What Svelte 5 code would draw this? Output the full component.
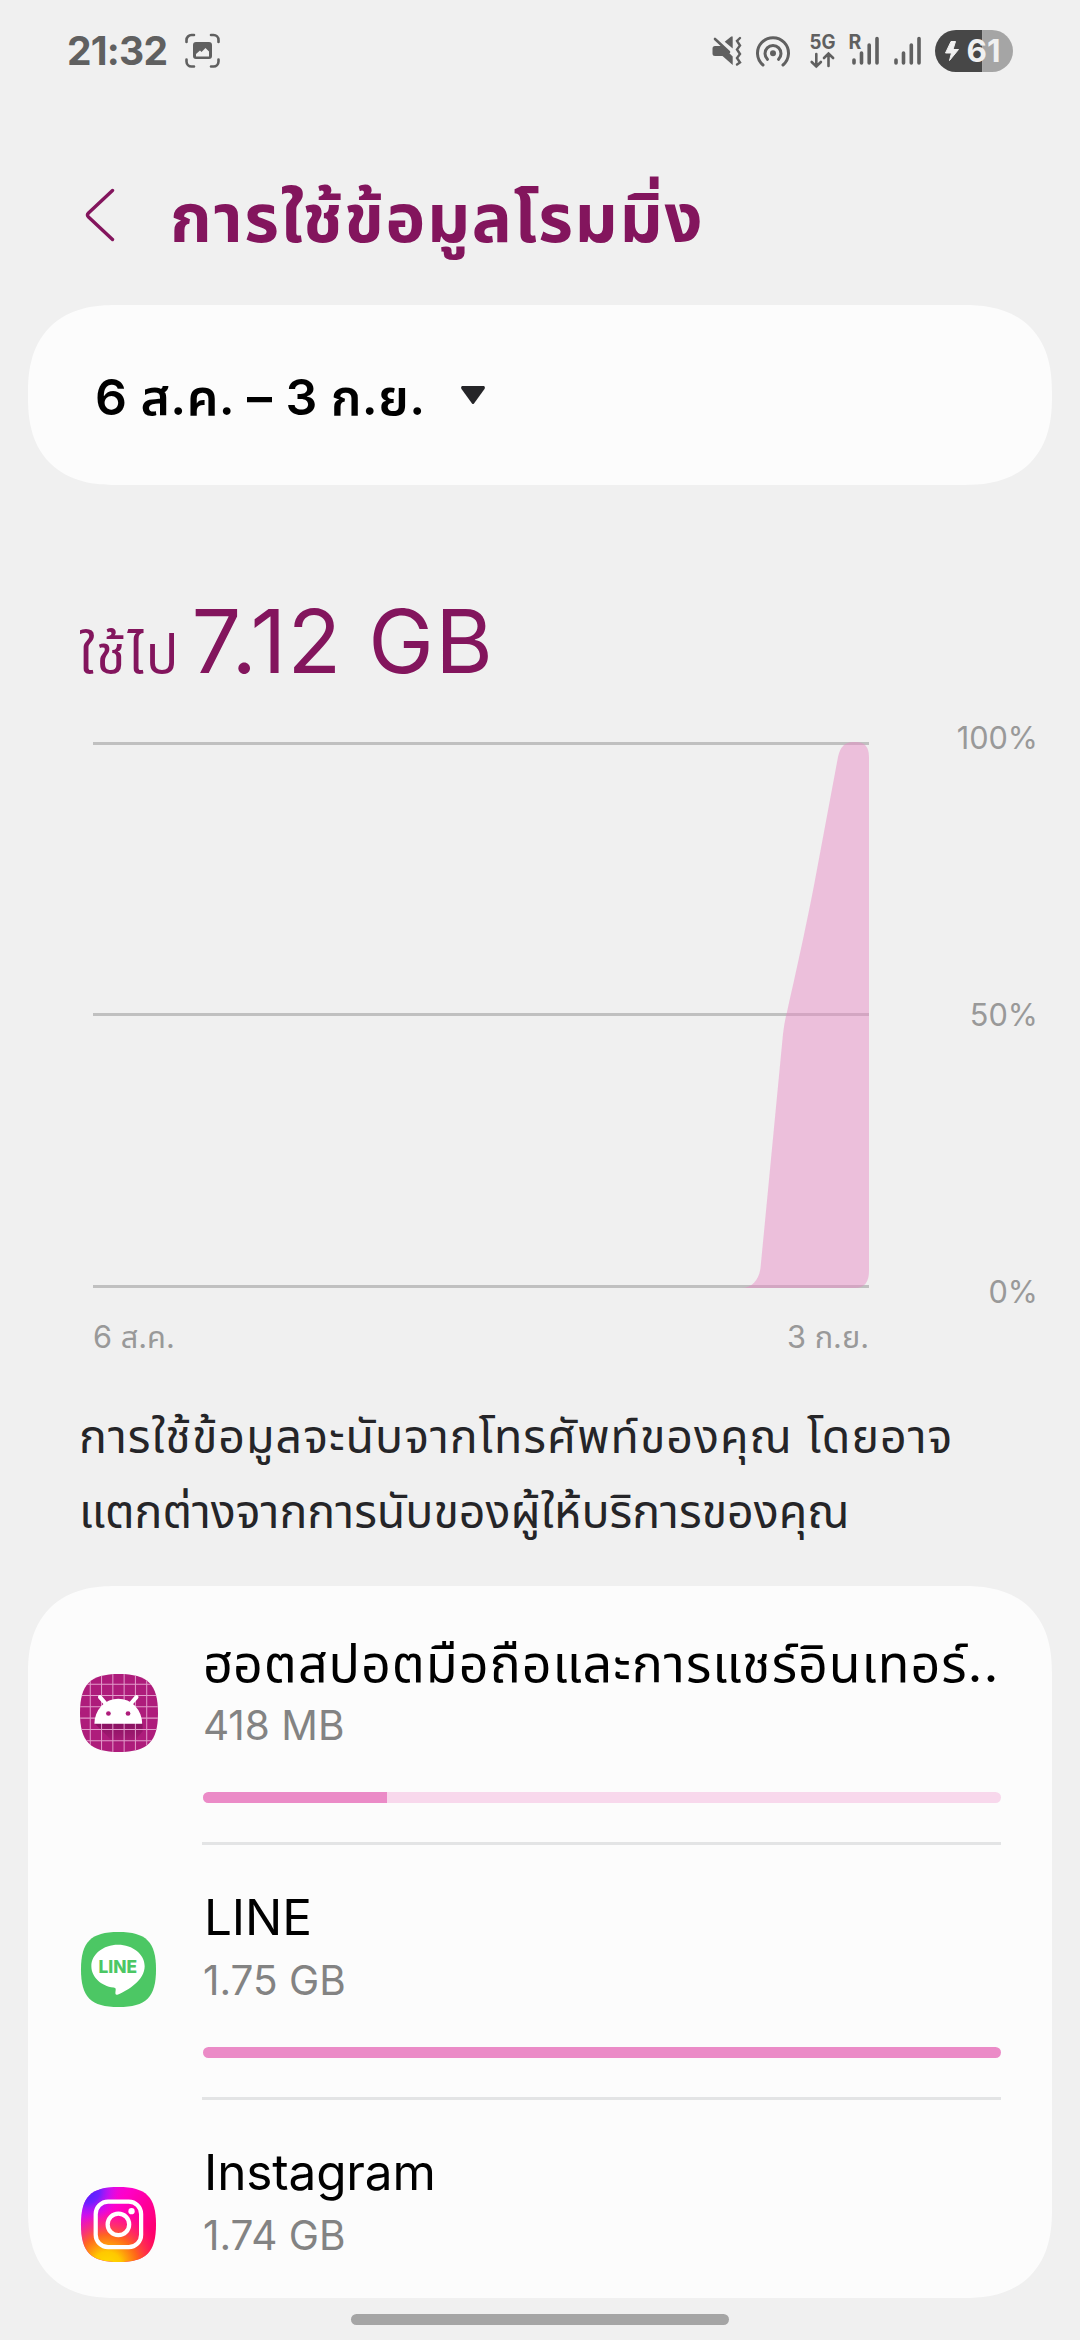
<script lang="ts">
  type App = { id: string; name: string; usage: string; percent: number };

  const apps: App[] = [
    { id: 'hotspot', name: 'ฮอตสปอตมือถือและการแชร์อินเทอร์..', usage: '418 MB', percent: 23.1 },
    { id: 'line', name: 'LINE', usage: '1.75 GB', percent: 100 },
    { id: 'instagram', name: 'Instagram', usage: '1.74 GB', percent: 99 },
  ];
  const squircle = 'M38 0C66 0 76 10 76 38S66 76 38 76 0 66 0 38 10 0 38 0Z';
  const gridSteps = [10, 21, 32, 43, 54, 65];
</script>

<div class="screen">
  <header class="status">
    <span class="status__time">21:32</span>
    <svg class="status__shot" width="36" height="36" viewBox="0 0 36 36">
      <path
        d="M1.5 9V7a5 5 0 0 1 5-5H9M26 2h2.500a5 5 0 0 1 5 5v2M33.500 26.500v2a5 5 0 0 1-5 5H26M9 33.500H6.500a5 5 0 0 1-5-5v-2"
        fill="none"
        stroke="#606060"
        stroke-width="2.600"
        stroke-linecap="round"
      />
      <path
        fill="#606060"
        fill-rule="evenodd"
        d="M11 9h13q3 0 3 3v11q0 3-3 3H11q-3 0-3-3V12q0-3 3-3ZM11 23.500h13v-5l-3.500-3.500-4 4-1.500-1.500-4 3.500Z"
      />
    </svg>
    <svg class="status__icons" width="305" height="46" viewBox="0 0 305 46">
      <g fill="none" stroke="#606060" stroke-width="2.600" stroke-linecap="round">
        <path d="M3 9 17 22" />
        <path d="m28 8-3 3 3 4.500-3 4 3 4.500-3 4 3 4.500-3 2" stroke-width="2.400" />
        <path d="M51 35a15.500 15.500 0 1 1 20 0" stroke-width="3" />
        <path d="M55.500 29.300a8 8 0 1 1 11 0" stroke-width="3" />
        <path
          d="M104.300 24v12.500M99.700 32l4.600 4.500 4.600-4.500M116.500 36V23.500M112 28l4.500-4.500 4.600 4.500"
          stroke-width="2.600"
        />
        <path
          d="M142 30v3M149.500 23v10M157.200 15v18M165 8.500v24.500M184 30v3M191.500 23v10M199.300 15v18M207 8.500v24.500"
          stroke-width="3.600"
        />
      </g>
      <g fill="#606060">
        <path d="M.5 18.500q0-2.500 2.500-2.500h7L20.700 26.500V35L10.500 26H3q-2.500 0-2.500-2.500ZM12.700 11.800l6.500-5.300h1.500V18.500Z" />
        <circle cx="61" cy="23.300" r="3" />
      </g>
      <text class="tiny" x="97.500" y="19" textLength="26" lengthAdjust="spacingAndGlyphs">5G</text>
      <text class="tiny" x="136.500" y="19">R</text>
      <path fill="#474747" d="M244 0h26.400v42H244a21 21 0 0 1 0-42Z" />
      <path fill="#a5a5a5" d="M270.400 0H280a21 21 0 0 1 0 42h-9.600Z" />
      <path
        fill="#f0f0f0"
        stroke="#f0f0f0"
        stroke-linejoin="round"
        d="M239 11.500 233.500 23h6L237.500 30.500 246.500 19.500h-5.500l2.500-8Z"
      />
      <text class="level" x="254.500" y="32.300" textLength="34" lengthAdjust="spacingAndGlyphs">61</text>
    </svg>
  </header>

  <div class="titlebar">
    <svg width="30" height="54" viewBox="0 0 30 54">
      <path
        d="M27.500 2.500 3.500 25q-2 2 0 4L27.500 51.500"
        fill="none"
        stroke="#83155d"
        stroke-width="3.400"
        stroke-linecap="round"
      />
    </svg>
    <h1>การใช้ข้อมูลโรมมิ่ง</h1>
  </div>

  <button class="card period">
    <span>6 ส.ค. – 3 ก.ย.</span>
    <svg width="24" height="19" viewBox="0 0 24 19">
      <path d="M1 0h22q1.500 1 .5 3L13 17.500q-1 1.200-2 0L.5 3Q-.5 1 1 0Z" fill="#252528" />
    </svg>
  </button>

  <p class="used"><span>ใช้ไป</span><strong>7.12 GB</strong></p>

  <section class="chart">
    <div class="chart__plot">
      <svg width="776" height="546" viewBox="0 0 776 546">
        <path d="M0 1.500h776M0 272.500h776M0 544.500h776" stroke="#c0c0c0" stroke-width="3" />
        <path
          fill="#e889c5"
          fill-opacity=".48"
          d="M648 546C660 546 666 537 667.500 526L690 292Q691.500 279 694 270C707 213 716 170 722 138L745 15Q748 0 760 0h3q13 0 13 15v514q0 17-14 17Z"
        />
      </svg>
      <div class="chart__dates"><span>6 ส.ค.</span><span>3 ก.ย.</span></div>
    </div>
    <div class="chart__scale"><span>100%</span><span>50%</span><span>0%</span></div>
  </section>

  <p class="note">
    การใช้ข้อมูลจะนับจากโทรศัพท์ของคุณ โดยอาจ<br />
    <span class="note__tail">แตกต่างจากการนับของผู้ให้บริการของคุณ</span>
  </p>

  <ul class="card apps">
    {#each apps as app (app.id)}
      <li class="app">
        <svg
          class="app__icon app__icon--{app.id}"
          width="78"
          height="78"
          viewBox={app.id === 'hotspot' ? '0 0 76 76' : '-1 -1 79 79'}
        >
          {#if app.id === 'hotspot'}
            <defs>
              <clipPath id="shape"><path d={squircle} /></clipPath>
              <linearGradient id="shade" x1="0" y1="0" x2="0" y2="1">
                <stop offset="0" stop-color="#7c1058" stop-opacity=".75" />
                <stop offset="1" stop-color="#7c1058" stop-opacity="0" />
              </linearGradient>
            </defs>
            <g clip-path="url(#shape)">
              <path d="M0 0h76v76H0Z" fill="#ae1c7b" />
              <path d="M14 48h47v8L50 69H35Z" fill="url(#shade)" />
              {#each gridSteps as step}
                <path d="M{step} 0v76M0 {step}h76" stroke="#e29bca" stroke-width="1" />
              {/each}
            </g>
            <path d="M14 48.500a23.300 24.500 0 0 1 46.600 0Z" fill="#fff" />
            <path
              d="m19.500 22.500 6 7M55 22.500l-6 7"
              stroke="#fff"
              stroke-width="4"
              stroke-linecap="round"
            />
            <circle cx="27.700" cy="38.500" r="2.300" fill="#ae1c7b" />
            <circle cx="46.800" cy="38.500" r="2.300" fill="#ae1c7b" />
          {:else if app.id === 'line'}
            <path d={squircle} fill="#4cc764" />
            <path
              d="M37.500 13c-15 0-27 9.700-27 21.700 0 10.800 9.600 20 22.500 21.600 2.600.5 2.400 1.500 1.900 4.500-.3 2 .2 3.500 2.600 2.500C47.500 59 64.500 49 64.500 34.700c0-12-12-21.700-27-21.700Z"
              fill="#fff"
            />
            <text class="line-mark" x="17.800" y="41.600" textLength="39" lengthAdjust="spacingAndGlyphs">LINE</text>
          {:else}
            <defs>
              <linearGradient id="ig-base" x1="0" y1="0" x2="1" y2=".7">
                <stop offset="0" stop-color="#c018ff" />
                <stop offset=".45" stop-color="#ff00c8" />
                <stop offset="1" stop-color="#ff0060" />
              </linearGradient>
              <radialGradient id="ig-warm" cx=".35" cy="1.050" r=".75">
                <stop offset="0" stop-color="#ffdc00" />
                <stop offset=".25" stop-color="#ffc800" />
                <stop offset=".55" stop-color="#ff7010" stop-opacity=".9" />
                <stop offset="1" stop-color="#ff3060" stop-opacity="0" />
              </radialGradient>
              <radialGradient id="ig-blue" cx=".08" cy=".05" r=".42">
                <stop offset="0" stop-color="#4a20ff" />
                <stop offset=".4" stop-color="#7020ff" />
                <stop offset="1" stop-color="#d010ff" stop-opacity="0" />
              </radialGradient>
            </defs>
            <path d={squircle} fill="url(#ig-base)" />
            <path d={squircle} fill="url(#ig-warm)" />
            <path d={squircle} fill="url(#ig-blue)" />
            <g fill="none" stroke="#fff" stroke-width="4.300">
              <rect x="14.900" y="14.900" width="46" height="46" rx="12.500" />
              <circle cx="37.900" cy="37.900" r="10.900" />
            </g>
            <circle cx="51.200" cy="24.500" r="3.200" fill="#fff" />
          {/if}
        </svg>
        <div class="app__body">
          <div class="app__name app__name--{app.id}">{app.name}</div>
          <div class="app__usage">{app.usage}</div>
          <div class="bar"><div class="bar__fill" style="width: {app.percent}%"></div></div>
        </div>
      </li>
    {/each}
  </ul>

  <div class="home"></div>
</div>

<style>
  :global(body) {
    background: #f0f0f0;
  }
  .screen {
    display: flex;
    flex-direction: column;
    box-sizing: border-box;
    width: 1080px;
    height: 2340px;
    overflow: hidden;
    background: #f0f0f0;
    font-family: Inter, 'Noto Sans Thai', 'Noto Sans', sans-serif;
    color: #000;
  }
  .status {
    display: flex;
    align-items: flex-start;
    flex: none;
    height: 150px;
    padding: 0 63px 0 67px;
  }
  .status__time {
    width: 118px;
    padding-top: 26px;
    font-size: 39px;
    font-weight: 700;
    line-height: 50px;
    letter-spacing: -0.8px;
    color: #606060;
  }
  .status__shot {
    margin-top: 33px;
  }
  .status__icons {
    margin: 30px 0 0 auto;
  }
  .tiny {
    font-size: 19.5px;
    font-weight: 700;
    fill: #606060;
  }
  .level {
    font-size: 31px;
    font-weight: 700;
    fill: #f0f0f0;
  }
  .titlebar {
    display: flex;
    align-items: center;
    flex: none;
    gap: 55px;
    height: 130px;
    margin-bottom: 25px;
    padding-left: 85px;
  }
  h1 {
    margin: 0;
    padding-top: 5px;
    font-size: 67px;
    font-weight: 700;
    line-height: 130px;
    letter-spacing: 1.6px;
    white-space: nowrap;
    color: #83155d;
  }
  .card {
    flex: none;
    box-sizing: border-box;
    margin: 0 28px;
    border: 0;
    border-radius: 76px;
    background: #fcfcfc;
  }
  @supports (corner-shape: superellipse(1.27)) {
    .card {
      border-radius: 88px;
      corner-shape: superellipse(1.27);
    }
  }
  .period {
    display: flex;
    align-items: center;
    gap: 36px;
    height: 180px;
    padding: 0 67px;
    font: 600 50px/100px Inter, 'Noto Sans Thai', sans-serif;
    letter-spacing: 0.4px;
    color: #000;
  }
  .period span {
    padding-top: 3px;
  }
  .used {
    display: flex;
    align-items: baseline;
    flex: none;
    gap: 11px;
    height: 110px;
    margin: 101px 0 0 79px;
    padding-bottom: 46px;
    font-size: 54px;
    line-height: 110px;
    letter-spacing: 2.1px;
    color: #83155d;
  }
  .used strong {
    font-size: 88px;
    font-weight: 400;
    letter-spacing: 1.2px;
  }
  .chart {
    display: flex;
    flex: none;
    justify-content: space-between;
    height: 630px;
    padding: 0 42px 0 93px;
    font-size: 30.7px;
    line-height: 40px;
    color: #999;
  }
  .chart__plot {
    width: 776px;
  }
  .chart__plot svg {
    display: block;
  }
  .chart__dates {
    display: flex;
    justify-content: space-between;
    margin-top: 29px;
  }
  .chart__scale {
    display: flex;
    flex-direction: column;
    justify-content: space-between;
    height: 594px;
    margin-top: -24px;
    text-align: right;
  }
  .note {
    flex: none;
    height: 150px;
    margin: 27px 0 37px 79px;
    font-size: 46.5px;
    line-height: 75px;
    letter-spacing: 1px;
    white-space: nowrap;
    color: #252528;
  }
  .note__tail {
    letter-spacing: 0;
  }
  .apps {
    height: 712px;
    padding: 4px 51px 0 52px;
    overflow: hidden;
    list-style: none;
  }
  .app {
    display: flex;
    height: 255px;
  }
  .app__icon {
    flex: none;
    margin: 86px 44px 0 0;
  }
  .app__icon--hotspot {
    margin-top: 84px;
  }
  .app__body {
    flex: 1;
    min-width: 0;
    border-bottom: 3px solid #e3e4e5;
  }
  .app__name {
    height: 70px;
    margin-top: 37px;
    padding-left: 2px;
    font-size: 49.5px;
    line-height: 70px;
    letter-spacing: -0.15px;
    white-space: nowrap;
  }
  .app__name--hotspot {
    padding-left: 1px;
    font-size: 52px;
    line-height: 73px;
    letter-spacing: 0.95px;
  }
  .app__usage {
    height: 50px;
    margin-top: 3px;
    padding-left: 1px;
    font-size: 40.5px;
    line-height: 52px;
    color: #838383;
  }
  .line-mark {
    font-size: 17.5px;
    font-weight: 800;
    fill: #4cc764;
  }
  .bar {
    height: 11px;
    margin: 42px 0 0 1px;
    border-radius: 6px;
    overflow: hidden;
    background: #f8d8ec;
  }
  .bar__fill {
    height: 100%;
    background: #eb8bc7;
  }
  .home {
    flex: none;
    align-self: center;
    width: 378px;
    height: 11px;
    margin-top: 16px;
    border-radius: 6px;
    background: #a5a5a5;
  }
</style>
